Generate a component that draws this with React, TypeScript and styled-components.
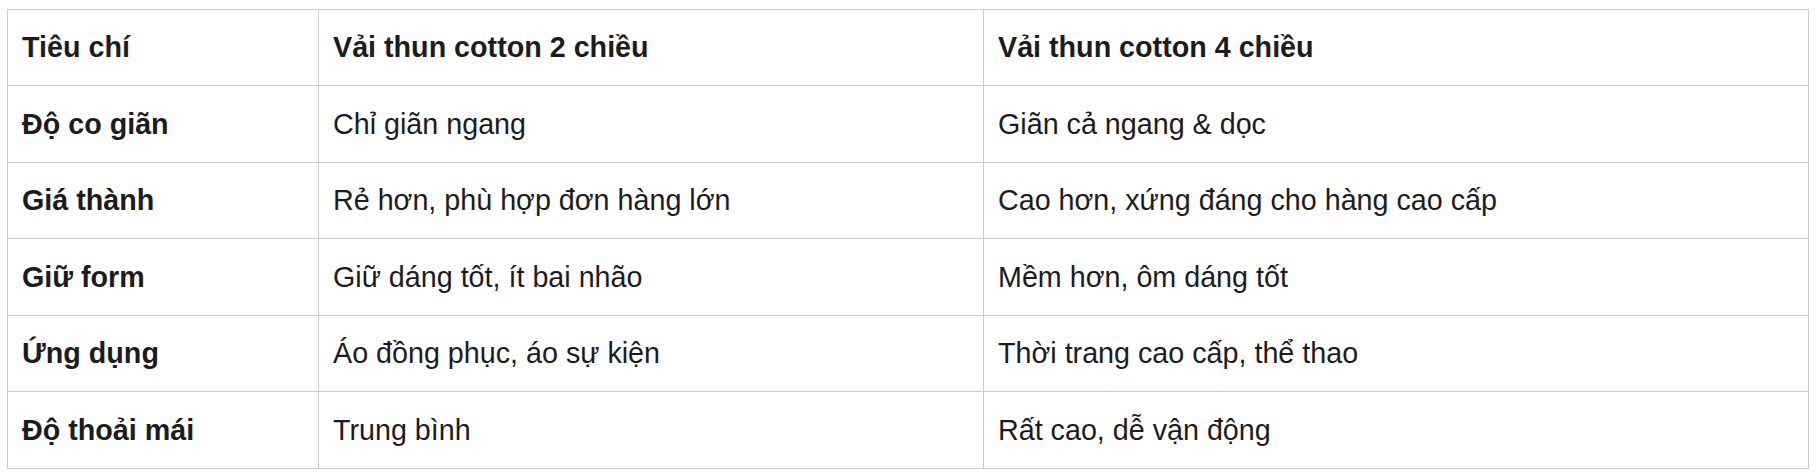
import React from "react";
import styled, { createGlobalStyle } from "styled-components";

const GlobalStyle = createGlobalStyle`
  html, body {
    margin: 0;
    padding: 0;
    background: #ffffff;
  }
  body {
    font-family: "Liberation Sans", Arial, sans-serif;
    color: #1c1c1c;
  }
`;

const Page = styled.div`
  padding: 9px 0 0 7px;
`;

const Table = styled.table`
  border-collapse: collapse;
  table-layout: fixed;
  width: 1801px;
  font-family: "Liberation Sans", Arial, sans-serif;
  font-size: 28.7px;
  color: #1c1c1c;
`;

const Cell = styled.td<{ $bold?: boolean }>`
  border: 1px solid #cccccc;
  padding: 14.4px 14px;
  line-height: 46.7px;
  text-align: left;
  vertical-align: middle;
  font-weight: ${(p) => (p.$bold ? 700 : 400)};
  white-space: nowrap;
`;

const HeadCell = styled.th`
  border: 1px solid #cccccc;
  padding: 14.4px 14px;
  line-height: 46.7px;
  text-align: left;
  vertical-align: middle;
  font-weight: 700;
  white-space: nowrap;
`;

const header = ["Tiêu chí", "Vải thun cotton 2 chiều", "Vải thun cotton 4 chiều"];

const rows: [string, string, string][] = [
  ["Độ co giãn", "Chỉ giãn ngang", "Giãn cả ngang & dọc"],
  ["Giá thành", "Rẻ hơn, phù hợp đơn hàng lớn", "Cao hơn, xứng đáng cho hàng cao cấp"],
  ["Giữ form", "Giữ dáng tốt, ít bai nhão", "Mềm hơn, ôm dáng tốt"],
  ["Ứng dụng", "Áo đồng phục, áo sự kiện", "Thời trang cao cấp, thể thao"],
  ["Độ thoải mái", "Trung bình", "Rất cao, dễ vận động"],
];

export default function App() {
  return (
    <>
      <GlobalStyle />
      <Page>
        <Table>
          <colgroup>
            <col style={{ width: 311 }} />
            <col style={{ width: 665 }} />
            <col style={{ width: 825 }} />
          </colgroup>
          <thead>
            <tr>
              {header.map((h) => (
                <HeadCell key={h}>{h}</HeadCell>
              ))}
            </tr>
          </thead>
          <tbody>
            {rows.map((r) => (
              <tr key={r[0]}>
                <Cell $bold>{r[0]}</Cell>
                <Cell>{r[1]}</Cell>
                <Cell>{r[2]}</Cell>
              </tr>
            ))}
          </tbody>
        </Table>
      </Page>
    </>
  );
}
